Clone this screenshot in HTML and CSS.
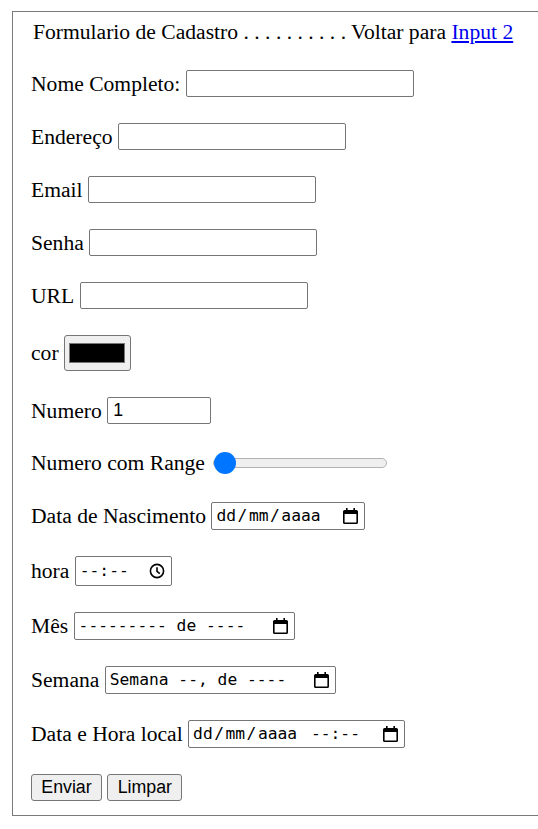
FILE: index.html
```html
<!DOCTYPE html>
<html lang="pt-BR">
<head>
<meta charset="utf-8">
<title>Formulario de Cadastro</title>
<link rel="stylesheet" href="styles.css">
</head>
<body>
<div class="form">
  <div class="head">Formulario de Cadastro . . . . . . . . . . Voltar para <a href="#">Input 2</a></div>
  <form class="rows">
    <div class="row"><label>Nome Completo:</label><input class="txt" type="text"></div>
    <div class="row"><label>Endereço</label><input class="txt" type="text"></div>
    <div class="row"><label>Email</label><input class="txt" type="email"></div>
    <div class="row"><label>Senha</label><input class="txt" type="password"></div>
    <div class="row"><label>URL</label><input class="txt" type="url"></div>
    <div class="row"><label>cor</label><button type="button" class="color"><span class="swatch"></span></button></div>
    <div class="row"><label>Numero</label><input class="txt num" type="text" value="1"></div>
    <div class="row"><label>Numero com Range</label><input class="range" type="range" min="0" max="100" value="0"></div>
    <div class="row"><label>Data de Nascimento</label>
      <div class="dt w-date"><span>dd<span class="sep">/</span>mm<span class="sep">/</span>aaaa</span>
        <svg class="cal" viewBox="0 0 15 16" width="15" height="16"><path d="M3 0v2H1.6A1.6 1.6 0 0 0 0 3.6v10.8A1.6 1.6 0 0 0 1.6 16h11.8a1.6 1.6 0 0 0 1.6-1.6V3.6A1.6 1.6 0 0 0 13.4 2H12V0h-1.6v2H4.6V0zM1.6 6h11.8v8.4H1.6z"/></svg>
      </div>
    </div>
    <div class="row"><label>hora</label>
      <div class="dt w-time"><span>--:--</span>
        <svg class="clock" viewBox="0 0 16 16" width="16" height="16"><circle cx="8" cy="8" r="6.6" fill="none" stroke="#000" stroke-width="1.6"/><path d="M8 4.2V8.4l2.8 2.2" fill="none" stroke="#000" stroke-width="1.6"/></svg>
      </div>
    </div>
    <div class="row"><label>Mês</label>
      <div class="dt w-month"><span>--------- de ----</span>
        <svg class="cal" viewBox="0 0 15 16" width="15" height="16"><path d="M3 0v2H1.6A1.6 1.6 0 0 0 0 3.6v10.8A1.6 1.6 0 0 0 1.6 16h11.8a1.6 1.6 0 0 0 1.6-1.6V3.6A1.6 1.6 0 0 0 13.4 2H12V0h-1.6v2H4.6V0zM1.6 6h11.8v8.4H1.6z"/></svg>
      </div>
    </div>
    <div class="row"><label>Semana</label>
      <div class="dt w-week"><span>Semana --, de ----</span>
        <svg class="cal" viewBox="0 0 15 16" width="15" height="16"><path d="M3 0v2H1.6A1.6 1.6 0 0 0 0 3.6v10.8A1.6 1.6 0 0 0 1.6 16h11.8a1.6 1.6 0 0 0 1.6-1.6V3.6A1.6 1.6 0 0 0 13.4 2H12V0h-1.6v2H4.6V0zM1.6 6h11.8v8.4H1.6z"/></svg>
      </div>
    </div>
    <div class="row"><label>Data e Hora local</label>
      <div class="dt w-dtl"><span>dd<span class="sep">/</span>mm<span class="sep">/</span>aaaa<span class="tsep"> </span>--:--</span>
        <svg class="cal" viewBox="0 0 15 16" width="15" height="16"><path d="M3 0v2H1.6A1.6 1.6 0 0 0 0 3.6v10.8A1.6 1.6 0 0 0 1.6 16h11.8a1.6 1.6 0 0 0 1.6-1.6V3.6A1.6 1.6 0 0 0 13.4 2H12V0h-1.6v2H4.6V0zM1.6 6h11.8v8.4H1.6z"/></svg>
      </div>
    </div>
    <div class="row"><button type="submit" class="btn b1">Enviar</button><button type="reset" class="btn b2">Limpar</button></div>
  </form>
</div>
</body>
</html>
```

FILE: styles.css
```css
html, body {
  overflow: hidden;
}
body {
  margin: 0;
  background: #fff;
  color: #000;
  font-family: "Liberation Serif", "Times New Roman", serif;
  font-size: 21.6px;
  line-height: 24px;
}
.form {
  margin: 11px 0 0 12px;
  width: 560px;
  border: 1px solid #7a7a7a;
  padding: 8px 0 14px 18px;
}
.head {
  height: 24px;
  padding-left: 2px;
  white-space: nowrap;
}
.head a {
  color: #0000ee;
}
.rows {
  display: flex;
  flex-direction: column;
  gap: 26px;
  margin: 26px 0 0 0;
}
.row {
  display: flex;
  align-items: center;
  gap: 5.4px;
}
.row label {
  white-space: nowrap;
}
.txt {
  width: 228px;
  height: 27px;
  box-sizing: border-box;
  margin: 0;
  border: 1px solid #767676;
  border-radius: 2px;
  padding: 1px 4px;
  font-family: "Liberation Sans", Arial, sans-serif;
  font-size: 17.78px;
  color: #000;
  background: #fff;
}
.num {
  width: 104px;
  padding-left: 5px;
}
.color {
  width: 67px;
  height: 36px;
  box-sizing: border-box;
  margin: 0;
  padding: 0;
  background: #efefef;
  border: 1px solid #767676;
  border-radius: 3px;
  display: flex;
  align-items: center;
  justify-content: center;
}
.swatch {
  display: block;
  width: 56px;
  height: 20px;
  box-sizing: border-box;
  background: #000;
  border: 1px solid #777;
}
.range {
  -webkit-appearance: none;
  appearance: none;
  width: 174px;
  height: 26px;
  margin: 0 0 0 3px;
  padding: 0;
  background: transparent;
}
.range::-webkit-slider-runnable-track {
  height: 10px;
  box-sizing: border-box;
  background: #efefef;
  border: 1px solid #b2b2b2;
  border-radius: 5px;
}
.range::-webkit-slider-thumb {
  -webkit-appearance: none;
  appearance: none;
  width: 22px;
  height: 22px;
  margin-top: -7px;
  border: none;
  border-radius: 50%;
  background: #0075ff;
}
.dt {
  display: flex;
  align-items: center;
  justify-content: space-between;
  box-sizing: border-box;
  height: 28px;
  border: 1px solid #767676;
  border-radius: 2px;
  padding: 0 6px 0 4px;
  font-family: "DejaVu Sans Mono", monospace;
  font-size: 16.3px;
  white-space: pre;
  background: #fff;
}
.dt .sep {
  margin: 0 1.5px;
}
.dt .tsep {
  margin-right: 4px;
}
.dt .cal {
  flex: none;
  fill: #000;
}
.dt .clock {
  flex: none;
}
.w-date { width: 154px; }
.w-time { width: 97px; height: 30px; padding-right: 6px; }
.w-month { width: 221px; }
.w-week { width: 231px; }
.w-dtl { width: 217px; }
.btn {
  height: 27px;
  box-sizing: border-box;
  margin: 0;
  padding: 0;
  border: 1px solid #767676;
  border-radius: 3px;
  background: #efefef;
  color: #000;
  font-family: "Liberation Sans", Arial, sans-serif;
  font-size: 17.78px;
}
.b1 { width: 71px; }
.b2 { width: 75px; }
```
